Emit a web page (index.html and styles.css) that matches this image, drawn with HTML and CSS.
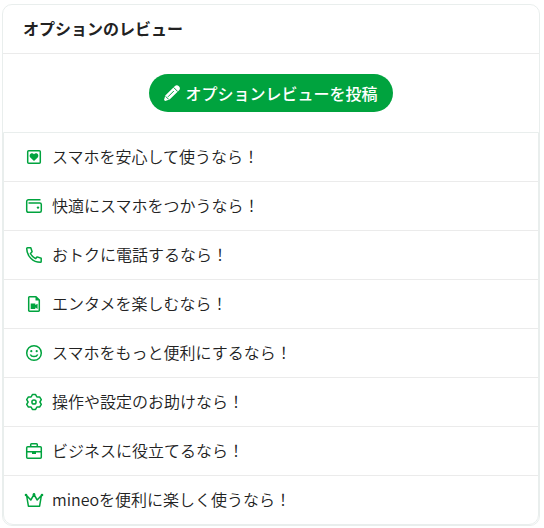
FILE: index.html
```html
<!DOCTYPE html>
<html lang="ja">
<head>
	<meta charset="utf-8">
	<meta name="viewport" content="width=device-width, initial-scale=1">
	<title>オプションのレビュー</title>
	<link rel="stylesheet" href="styles.css">
</head>
<body>
	<section class="card">
		<h2 class="card_title">オプションのレビュー</h2>

		<div class="card_post">
			<button type="button" class="post_button">
				<svg class="post_icon" viewBox="0 0 16 16" aria-hidden="true">
					<path fill="#fff" d="M10.700 1.300a3 3 0 0 1 4.200 0 3 3 0 0 1 0 4.200L5.600 14.600 1.200 16 0 14.900l1.300-4.500z"/>
					<path fill="none" stroke="#00a33e" stroke-width="1" d="M9.600 2.400l4.200 4.200M4 11.800l5.800-5.800M1.700 11.400l3 3"/>
				</svg>
				オプションレビューを投稿
			</button>
		</div>

		<ul class="menu">
			<li><a href="#anshin">
				<svg class="icon" viewBox="0 0 20 20" aria-hidden="true">
					<rect x="3.700" y="3.700" width="12.600" height="12.600" rx="1"/>
					<path class="fill" d="M10 14 6.300 10.500C4.200 7.800 7.800 4.800 10 7.200c2.200-2.400 5.800.6 3.700 3.300z"/>
				</svg>
				スマホを安心して使うなら！
			</a></li>
			<li><a href="#kaiteki">
				<svg class="icon" viewBox="0 0 20 20" aria-hidden="true">
					<path d="M16.500 3.700H4.500a1.800 1.800 0 0 0-1.800 1.800v9a1.800 1.800 0 0 0 1.800 1.800h11.300a1.500 1.500 0 0 0 1.500-1.500V8.500A1.500 1.500 0 0 0 15.800 7H4.500"/>
					<circle class="fill" cx="14" cy="11.600" r="1.200"/>
				</svg>
				快適にスマホをつかうなら！
			</a></li>
			<li><a href="#denwa">
				<svg class="icon" viewBox="0 0 20 20" aria-hidden="true">
					<path d="M3.500 2.800h3.300l1.300 4-1.700 1.700a12.500 12.500 0 0 0 5.100 5.100l1.700-1.700 4 1.300v3.300c0 .4-.3.800-.8.800C9 17.300 2.700 11 2.700 3.600c0-.5.4-.8.8-.8z"/>
				</svg>
				おトクに電話するなら！
			</a></li>
			<li><a href="#entame">
				<svg class="icon" viewBox="0 0 20 20" aria-hidden="true">
					<path d="M12 2.700H5.500a.8.800 0 0 0-.8.800v13a.8.800 0 0 0 .8.800h9a.8.800 0 0 0 .8-.8V6z"/>
					<path class="fill" d="M11.500 2.500V6.500h4zM6.700 9.500h4.600v1.600l2.300-1.400v5.200l-2.300-1.400v1.600H6.700z"/>
				</svg>
				エンタメを楽しむなら！
			</a></li>
			<li><a href="#benri">
				<svg class="icon" viewBox="0 0 20 20" aria-hidden="true">
					<circle cx="10" cy="10" r="7.300"/>
					<circle class="fill" cx="7.300" cy="8.200" r="1.100"/>
					<circle class="fill" cx="12.700" cy="8.200" r="1.100"/>
					<path d="M6.300 11.500c1.200 2.800 6.200 2.800 7.400 0"/>
				</svg>
				スマホをもっと便利にするなら！
			</a></li>
			<li><a href="#settei">
				<svg class="icon" viewBox="0 0 20 20" aria-hidden="true">
					<path d="M8.400 2.600h3.200l1.300 2.400 2.700-.1 1.700 2.800-1.400 2.300 1.400 2.300-1.700 2.800-2.700-.1-1.300 2.400H8.400L7.100 15l-2.700.1-1.700-2.800L4.100 10 2.700 7.700l1.700-2.800L7.100 5z"/>
					<circle cx="10" cy="10" r="2.100"/>
				</svg>
				操作や設定のお助けなら！
			</a></li>
			<li><a href="#business">
				<svg class="icon" viewBox="0 0 20 20" aria-hidden="true">
					<rect x="2.700" y="5.700" width="14.600" height="11.600" rx="1"/>
					<path d="M6.700 5.500V3.500a.8.800 0 0 1 .8-.8h5a.8.800 0 0 1 .8.800v2M3 10.700h14"/>
					<path class="fill" d="M8 10h4v3H8z"/>
				</svg>
				ビジネスに役立てるなら！
			</a></li>
			<li><a href="#mineo">
				<svg class="icon" viewBox="0 0 20 20" aria-hidden="true">
					<path d="M2.600 5.500 4.400 16.200h11.200L17.400 5.500l-4.200 4.500L10 4.500 6.800 10z"/>
					<circle class="fill" cx="2" cy="5" r="1.300"/>
					<circle class="fill" cx="10" cy="4.200" r="1.300"/>
					<circle class="fill" cx="18" cy="5" r="1.300"/>
				</svg>
				mineoを便利に楽しく使うなら！
			</a></li>
		</ul>
	</section>
</body>
</html>
```

FILE: styles.css
```css
* {
	box-sizing: border-box;
}
body {
	margin: 4px 4px 2px 2px;
	background: #fff;
	color: #222;
	font-family: "Noto Sans CJK JP", sans-serif;
	font-size: 16px;
	line-height: 24px;
}
.card {
	border: 1px solid #e9eeed;
	border-radius: 10px;
}
.card_title {
	margin: 0;
	padding: 11px 20px 13px;
	border-bottom: 1px solid #ebebeb;
	font-size: 16px;
	font-weight: bold;
}
.card_post {
	display: flex;
	justify-content: center;
	padding: 20px;
}
.post_button {
	display: flex;
	align-items: center;
	gap: 5px;
	height: 38px;
	padding: 0 15px 1px;
	border: 0;
	border-radius: 19px;
	background: #00a33e;
	color: #fff;
	font: inherit;
	font-weight: 500;
	cursor: pointer;
}
.post_icon {
	width: 16px;
	height: 16px;
}
.menu {
	margin: 0;
	padding: 0;
	border: 1px solid #e9eeed;
	border-radius: 0 0 10px 10px;
	font-weight: 350;
	list-style: none;
}
.menu li + li {
	border-top: 1px solid #ebebeb;
}
.menu a {
	display: flex;
	align-items: flex-end;
	gap: 8px;
	padding: 11px 20px 13px;
	color: inherit;
	text-decoration: none;
}
.icon {
	flex: none;
	width: 20px;
	height: 20px;
	margin-bottom: 1px;
	fill: none;
	stroke: #00a33e;
	stroke-width: 1.5;
	stroke-linejoin: round;
}
.icon .fill {
	fill: #00a33e;
	stroke: none;
}
```
